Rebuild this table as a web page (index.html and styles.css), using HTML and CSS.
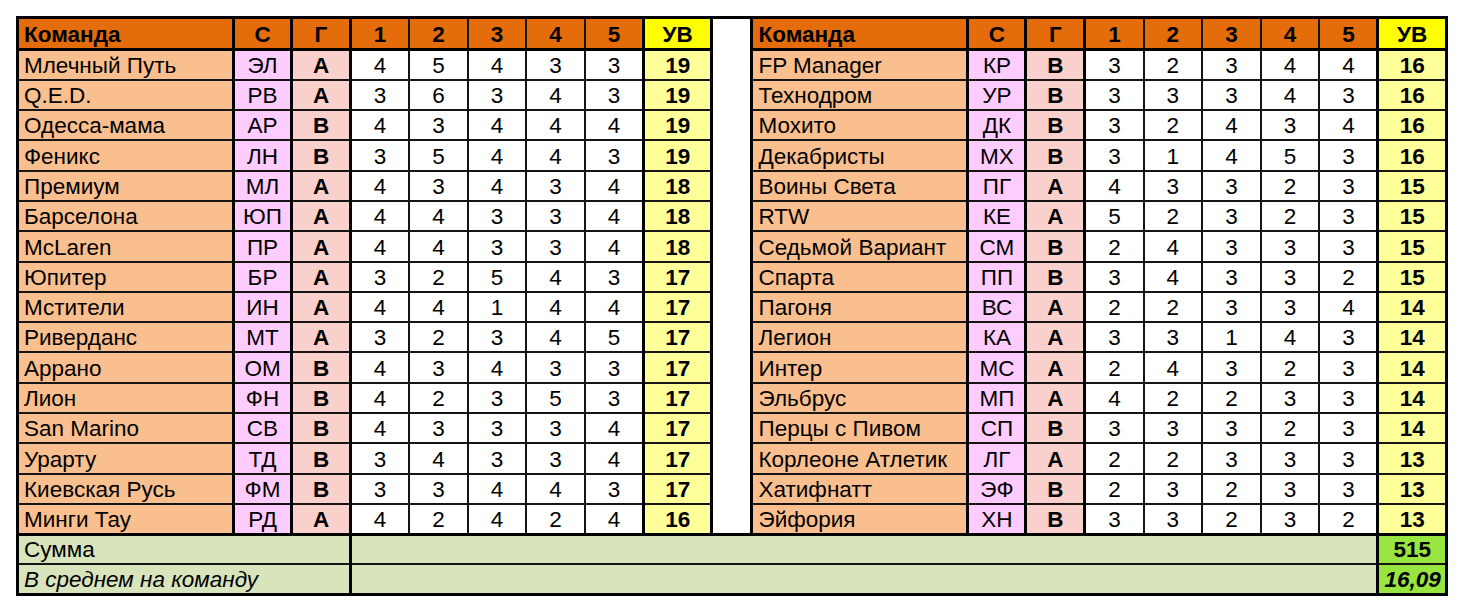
FILE: index.html
```html
<!DOCTYPE html>
<html lang="ru">
<head>
<meta charset="utf-8">
<title>Таблица</title>
<link rel="stylesheet" href="styles.css">
</head>
<body>
<div class="page">
<table class="sheet">
<colgroup>
<col class="w-name"><col class="w-code"><col class="w-grp"><col class="w-n"><col class="w-n"><col class="w-n"><col class="w-n"><col class="w-n"><col class="w-uv">
<col class="w-gap">
<col class="w-name"><col class="w-code"><col class="w-grp"><col class="w-n"><col class="w-n"><col class="w-n"><col class="w-n"><col class="w-n"><col class="w-uv">
</colgroup>
<thead>
<tr class="head">
<th class="hd name-h">Команда</th><th class="hd code-h">С</th><th class="hd grp-h">Г</th><th class="hd">1</th><th class="hd">2</th><th class="hd">3</th><th class="hd">4</th><th class="hd">5</th><th class="hd uv-h">УВ</th>
<th class="gap"></th>
<th class="hd name-h">Команда</th><th class="hd code-h">С</th><th class="hd grp-h">Г</th><th class="hd">1</th><th class="hd">2</th><th class="hd">3</th><th class="hd">4</th><th class="hd">5</th><th class="hd uv-h">УВ</th>
</tr>
</thead>
<tbody>
<tr><td class="name">Млечный Путь</td><td class="code">ЭЛ</td><td class="grp">А</td><td class="n">4</td><td class="n">5</td><td class="n">4</td><td class="n">3</td><td class="n">3</td><td class="uv">19</td><td class="gap"></td><td class="name">FP Manager</td><td class="code">КР</td><td class="grp">В</td><td class="n">3</td><td class="n">2</td><td class="n">3</td><td class="n">4</td><td class="n">4</td><td class="uv">16</td></tr>
<tr><td class="name">Q.E.D.</td><td class="code">РВ</td><td class="grp">А</td><td class="n">3</td><td class="n">6</td><td class="n">3</td><td class="n">4</td><td class="n">3</td><td class="uv">19</td><td class="gap"></td><td class="name">Технодром</td><td class="code">УР</td><td class="grp">В</td><td class="n">3</td><td class="n">3</td><td class="n">3</td><td class="n">4</td><td class="n">3</td><td class="uv">16</td></tr>
<tr><td class="name">Одесса-мама</td><td class="code">АР</td><td class="grp">В</td><td class="n">4</td><td class="n">3</td><td class="n">4</td><td class="n">4</td><td class="n">4</td><td class="uv">19</td><td class="gap"></td><td class="name">Мохито</td><td class="code">ДК</td><td class="grp">В</td><td class="n">3</td><td class="n">2</td><td class="n">4</td><td class="n">3</td><td class="n">4</td><td class="uv">16</td></tr>
<tr><td class="name">Феникс</td><td class="code">ЛН</td><td class="grp">В</td><td class="n">3</td><td class="n">5</td><td class="n">4</td><td class="n">4</td><td class="n">3</td><td class="uv">19</td><td class="gap"></td><td class="name">Декабристы</td><td class="code">МХ</td><td class="grp">В</td><td class="n">3</td><td class="n">1</td><td class="n">4</td><td class="n">5</td><td class="n">3</td><td class="uv">16</td></tr>
<tr><td class="name">Премиум</td><td class="code">МЛ</td><td class="grp">А</td><td class="n">4</td><td class="n">3</td><td class="n">4</td><td class="n">3</td><td class="n">4</td><td class="uv">18</td><td class="gap"></td><td class="name">Воины Света</td><td class="code">ПГ</td><td class="grp">А</td><td class="n">4</td><td class="n">3</td><td class="n">3</td><td class="n">2</td><td class="n">3</td><td class="uv">15</td></tr>
<tr><td class="name">Барселона</td><td class="code">ЮП</td><td class="grp">А</td><td class="n">4</td><td class="n">4</td><td class="n">3</td><td class="n">3</td><td class="n">4</td><td class="uv">18</td><td class="gap"></td><td class="name">RTW</td><td class="code">КЕ</td><td class="grp">А</td><td class="n">5</td><td class="n">2</td><td class="n">3</td><td class="n">2</td><td class="n">3</td><td class="uv">15</td></tr>
<tr><td class="name">McLaren</td><td class="code">ПР</td><td class="grp">А</td><td class="n">4</td><td class="n">4</td><td class="n">3</td><td class="n">3</td><td class="n">4</td><td class="uv">18</td><td class="gap"></td><td class="name">Седьмой Вариант</td><td class="code">СМ</td><td class="grp">В</td><td class="n">2</td><td class="n">4</td><td class="n">3</td><td class="n">3</td><td class="n">3</td><td class="uv">15</td></tr>
<tr><td class="name">Юпитер</td><td class="code">БР</td><td class="grp">А</td><td class="n">3</td><td class="n">2</td><td class="n">5</td><td class="n">4</td><td class="n">3</td><td class="uv">17</td><td class="gap"></td><td class="name">Спарта</td><td class="code">ПП</td><td class="grp">В</td><td class="n">3</td><td class="n">4</td><td class="n">3</td><td class="n">3</td><td class="n">2</td><td class="uv">15</td></tr>
<tr><td class="name">Мстители</td><td class="code">ИН</td><td class="grp">А</td><td class="n">4</td><td class="n">4</td><td class="n">1</td><td class="n">4</td><td class="n">4</td><td class="uv">17</td><td class="gap"></td><td class="name">Пагоня</td><td class="code">ВС</td><td class="grp">А</td><td class="n">2</td><td class="n">2</td><td class="n">3</td><td class="n">3</td><td class="n">4</td><td class="uv">14</td></tr>
<tr><td class="name">Риверданс</td><td class="code">МТ</td><td class="grp">А</td><td class="n">3</td><td class="n">2</td><td class="n">3</td><td class="n">4</td><td class="n">5</td><td class="uv">17</td><td class="gap"></td><td class="name">Легион</td><td class="code">КА</td><td class="grp">А</td><td class="n">3</td><td class="n">3</td><td class="n">1</td><td class="n">4</td><td class="n">3</td><td class="uv">14</td></tr>
<tr><td class="name">Аррано</td><td class="code">ОМ</td><td class="grp">В</td><td class="n">4</td><td class="n">3</td><td class="n">4</td><td class="n">3</td><td class="n">3</td><td class="uv">17</td><td class="gap"></td><td class="name">Интер</td><td class="code">МС</td><td class="grp">А</td><td class="n">2</td><td class="n">4</td><td class="n">3</td><td class="n">2</td><td class="n">3</td><td class="uv">14</td></tr>
<tr><td class="name">Лион</td><td class="code">ФН</td><td class="grp">В</td><td class="n">4</td><td class="n">2</td><td class="n">3</td><td class="n">5</td><td class="n">3</td><td class="uv">17</td><td class="gap"></td><td class="name">Эльбрус</td><td class="code">МП</td><td class="grp">А</td><td class="n">4</td><td class="n">2</td><td class="n">2</td><td class="n">3</td><td class="n">3</td><td class="uv">14</td></tr>
<tr><td class="name">San Marino</td><td class="code">СВ</td><td class="grp">В</td><td class="n">4</td><td class="n">3</td><td class="n">3</td><td class="n">3</td><td class="n">4</td><td class="uv">17</td><td class="gap"></td><td class="name">Перцы с Пивом</td><td class="code">СП</td><td class="grp">В</td><td class="n">3</td><td class="n">3</td><td class="n">3</td><td class="n">2</td><td class="n">3</td><td class="uv">14</td></tr>
<tr><td class="name">Урарту</td><td class="code">ТД</td><td class="grp">В</td><td class="n">3</td><td class="n">4</td><td class="n">3</td><td class="n">3</td><td class="n">4</td><td class="uv">17</td><td class="gap"></td><td class="name">Корлеоне Атлетик</td><td class="code">ЛГ</td><td class="grp">А</td><td class="n">2</td><td class="n">2</td><td class="n">3</td><td class="n">3</td><td class="n">3</td><td class="uv">13</td></tr>
<tr><td class="name">Киевская Русь</td><td class="code">ФМ</td><td class="grp">В</td><td class="n">3</td><td class="n">3</td><td class="n">4</td><td class="n">4</td><td class="n">3</td><td class="uv">17</td><td class="gap"></td><td class="name">Хатифнатт</td><td class="code">ЭФ</td><td class="grp">В</td><td class="n">2</td><td class="n">3</td><td class="n">2</td><td class="n">3</td><td class="n">3</td><td class="uv">13</td></tr>
<tr><td class="name">Минги Тау</td><td class="code">РД</td><td class="grp">А</td><td class="n">4</td><td class="n">2</td><td class="n">4</td><td class="n">2</td><td class="n">4</td><td class="uv">16</td><td class="gap"></td><td class="name">Эйфория</td><td class="code">ХН</td><td class="grp">В</td><td class="n">3</td><td class="n">3</td><td class="n">2</td><td class="n">3</td><td class="n">2</td><td class="uv">13</td></tr>
</tbody>
<tfoot>
<tr class="total"><td class="sum-label" colspan="3">Сумма</td><td class="sum-mid" colspan="15"></td><td class="sum-val">515</td></tr>
<tr class="total avg"><td class="sum-label" colspan="3">В среднем на команду</td><td class="sum-mid" colspan="15"></td><td class="sum-val">16,09</td></tr>
</tfoot>
</table>
</div>
</body>
</html>
```

FILE: styles.css
```css
html, body {
  margin: 0;
  background: #ffffff;
}

.page {
  padding: 16px 0 0 16px;
  font-family: "Liberation Sans", Arial, sans-serif;
}

.sheet {
  border-collapse: collapse;
  table-layout: fixed;
  width: 1432px;
  border: 3px solid #000;
  font-size: 22.5px;
  color: #000;
}

.w-name { width: 216px; }
.w-code { width: 58px; }
.w-grp { width: 59px; }
.w-n { width: 58.6px; }
.w-uv { width: 68.5px; }
.w-gap { width: 40px; }

.sheet th,
.sheet td {
  border: 2px solid #151515;
  padding: 0 5px 1px;
  line-height: 24px;
  white-space: nowrap;
  overflow: hidden;
  vertical-align: bottom;
  text-align: center;
  font-weight: normal;
}

.head { height: 32px; }
tbody tr { height: 30.3px; }
.total { height: 30px; }

.sheet .hd {
  background: #e46c0a;
  font-weight: bold;
  border-bottom: 3px solid #000;
}
.sheet .name-h {
  text-align: left;
  border-right: 3px solid #000;
  border-left: 3px solid #000;
}
.sheet .uv-h { background: #ffff00; }

.sheet .name {
  background: #fabf8f;
  text-align: left;
  border-right: 3px solid #000;
  border-left: 3px solid #000;
}

.sheet .code,
.sheet .code-h { border-right: 3px solid #000; }
.sheet .code { background: #ffccff; }

.sheet .grp,
.sheet .grp-h { border-right: 3px solid #000; }
.sheet .grp { background: #f9d0cc; font-weight: bold; }

.sheet .n { background: #ffffff; }

.sheet .uv,
.sheet .uv-h { border-left: 3px solid #000; border-right: 3px solid #000; }
.sheet .uv { background: #ffff99; font-weight: bold; }

.sheet .gap {
  background: #ffffff;
  border-top: none;
  border-bottom: none;
  border-left: 3px solid #000;
  border-right: 3px solid #000;
}

.sheet .sum-label,
.sheet .sum-mid,
.sheet .sum-val {
  background: #d8e4bc;
  border-top: 3px solid #000;
}
.sheet .sum-label { text-align: left; border-right: 3px solid #000; }
.sheet .sum-val {
  background: #99e53f;
  font-weight: bold;
  border-left: 3px solid #000;
}

.sheet .avg td { border-top: 2px solid #151515; }
.sheet .avg .sum-label,
.sheet .avg .sum-val { font-style: italic; }
```
